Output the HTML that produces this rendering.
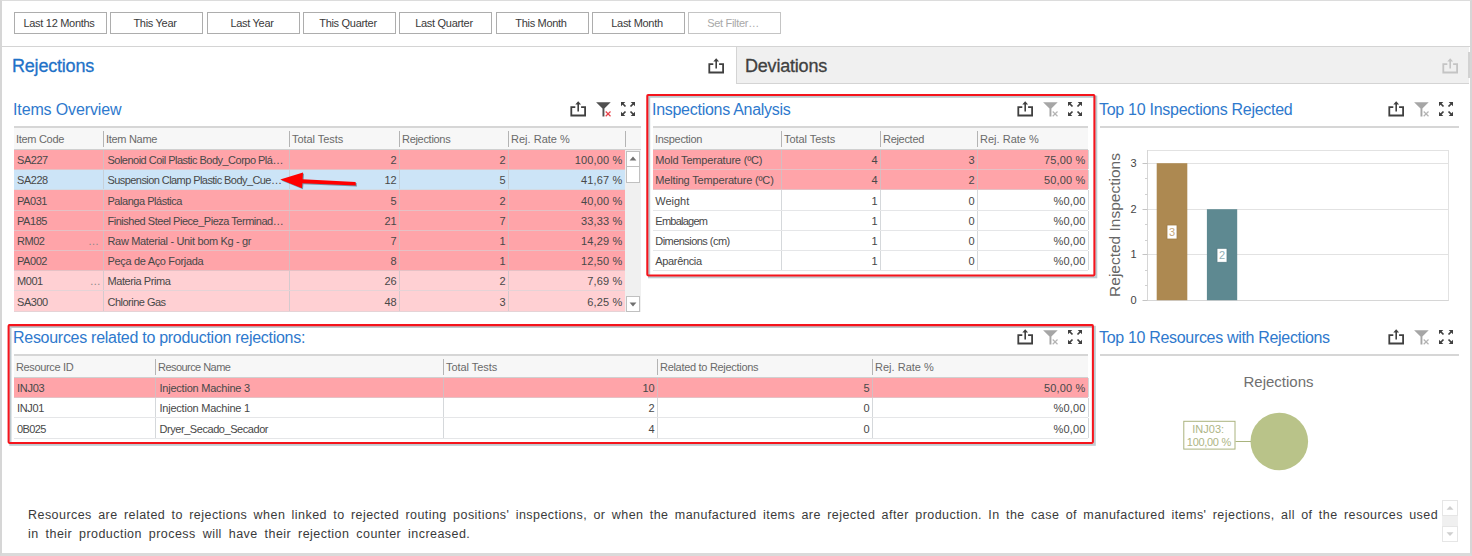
<!DOCTYPE html>
<html><head><meta charset="utf-8"><title>Rejections</title>
<style>
html,body{margin:0;padding:0;background:#fff}
body{width:1472px;height:556px;position:relative;overflow:hidden;font-family:"Liberation Sans",sans-serif;font-size:11px;color:#404040}
.a{position:absolute}
.frame{left:0;top:0;width:1468px;height:552px;border-left:2px solid #d6d6d6;border-top:1px solid #dcdcdc;border-right:2px solid #d6d6d6;border-bottom:3px solid #dadada}
.btn{position:absolute;top:12px;height:20px;width:91px;border:1px solid #adadad;background:#fff;text-align:center;line-height:20px;font-size:11px;color:#3a3a3a;letter-spacing:-0.3px;text-indent:-3px}
.hl{position:absolute;height:1px;background:#d4d4d4}
.title{position:absolute;color:#2e79cd;font-size:16px;white-space:nowrap;line-height:20px;letter-spacing:-0.1px}
.tline{position:absolute;height:2px;background:#d6d6d6}
.th{position:absolute;background:#f7f7f7;border-bottom:1px solid #d0d0d0;box-sizing:border-box}
.hc{position:absolute;top:0;color:#6a6a6a;white-space:nowrap;font-size:11px;letter-spacing:-0.3px}
.hs{position:absolute;width:1px;background:#b4b4b4}
.row{position:absolute;border-bottom:1px solid rgba(212,214,217,.6);box-sizing:border-box}
.c{position:absolute;top:0;bottom:0;white-space:nowrap;overflow:hidden;box-sizing:border-box;padding:0 2.5px 0 4px;letter-spacing:-0.45px;color:#484848}
.r{text-align:right}
.vs{position:absolute;top:0;bottom:0;width:1px;background:rgba(195,200,204,.7)}
.red{position:absolute;border:2px solid #e8141c;box-shadow:1px 1px 2px rgba(0,0,0,.3);box-sizing:border-box}
svg{position:absolute;overflow:visible}
</style></head><body>
<div class="a frame"></div>
<div class="btn" style="left:14px">Last 12 Months</div>
<div class="btn" style="left:110px">This Year</div>
<div class="btn" style="left:207px">Last Year</div>
<div class="btn" style="left:303px">This Quarter</div>
<div class="btn" style="left:399px">Last Quarter</div>
<div class="btn" style="left:496px">This Month</div>
<div class="btn" style="left:592px">Last Month</div>
<div class="btn" style="left:688px;color:#a8a8a8;border-color:#c4c4c4">Set Filter…</div>
<div class="hl" style="left:2px;top:46px;width:1468px"></div>
<div class="a" style="left:736px;top:47px;width:733px;height:37px;background:#f0f0f0;border-left:1px solid #d4d4d4;border-bottom:1px solid #d4d4d4;box-sizing:border-box"></div>
<div class="a" style="left:1468px;top:52px;width:2px;height:26px;background:#d2d2d2"></div>
<div class="a" style="left:12px;top:54px;font-size:18px;color:#1f72c8;line-height:24px;white-space:nowrap;letter-spacing:-0.2px;-webkit-text-stroke:0.3px #1f72c8">Rejections</div>
<div class="a" style="left:745px;top:54px;font-size:18px;color:#404040;line-height:24px;white-space:nowrap;letter-spacing:-0.2px;-webkit-text-stroke:0.3px #404040">Deviations</div>
<svg style="left:708px;top:58px" width="17" height="16" viewBox="0 0 17 16"><path d="M5.3 6.2H1.3V14.5H15.1V6.2H11.1" fill="none" stroke="#404040" stroke-width="1.8"/><path d="M8.2 10.6V2.5" fill="none" stroke="#404040" stroke-width="1.6"/><path d="M5.3 3.6L8.2 0.3L11.1 3.6Z" fill="#404040"/></svg>
<svg style="left:1442px;top:58px" width="17" height="16" viewBox="0 0 17 16"><path d="M5.3 6.2H1.3V14.5H15.1V6.2H11.1" fill="none" stroke="#c4c4c4" stroke-width="1.8"/><path d="M8.2 10.6V2.5" fill="none" stroke="#c4c4c4" stroke-width="1.6"/><path d="M5.3 3.6L8.2 0.3L11.1 3.6Z" fill="#c4c4c4"/></svg>
<div class="title" style="left:13px;top:100px;letter-spacing:-0.13px">Items Overview</div>
<svg style="left:570.4px;top:101.4px" width="17" height="16" viewBox="0 0 17 16"><path d="M5.3 6.2H1.3V14.5H15.1V6.2H11.1" fill="none" stroke="#404040" stroke-width="1.8"/><path d="M8.2 10.6V2.5" fill="none" stroke="#404040" stroke-width="1.6"/><path d="M5.3 3.6L8.2 0.3L11.1 3.6Z" fill="#404040"/></svg>
<svg style="left:596px;top:102px" width="16" height="16" viewBox="0 0 16 16"><path d="M0.1 0.2H14.7L8.4 6.6V14.4H6.5V6.6Z" fill="#505050"/><path d="M9.7 9.5L14.5 14.2M14.5 9.5L9.7 14.2" stroke="#e8424a" stroke-width="1.2" fill="none"/></svg>
<svg style="left:621.4px;top:101.9px" width="14" height="14" viewBox="0 0 14 14"><g><path d="M0 0H4.3L0 4.3Z" fill="#404040"/><path d="M1.5 1.5L4.5 4.5" stroke="#404040" stroke-width="1.7" fill="none"/></g><g transform="translate(14 0) scale(-1 1)"><path d="M0 0H4.3L0 4.3Z" fill="#404040"/><path d="M1.5 1.5L4.5 4.5" stroke="#404040" stroke-width="1.7" fill="none"/></g><g transform="translate(0 14) scale(1 -1)"><path d="M0 0H4.3L0 4.3Z" fill="#404040"/><path d="M1.5 1.5L4.5 4.5" stroke="#404040" stroke-width="1.7" fill="none"/></g><g transform="translate(14 14) scale(-1 -1)"><path d="M0 0H4.3L0 4.3Z" fill="#404040"/><path d="M1.5 1.5L4.5 4.5" stroke="#404040" stroke-width="1.7" fill="none"/></g></svg>
<div class="tline" style="left:14px;top:126px;width:627px"></div>
<div class="th" style="left:14px;top:128px;width:627px;height:22px">
<div class="hc" style="left:2px;line-height:23px">Item Code</div>
<div class="hs" style="left:89px;top:3px;height:16px"></div>
<div class="hc" style="left:92px;line-height:23px">Item Name</div>
<div class="hs" style="left:275px;top:3px;height:16px"></div>
<div class="hc" style="left:278px;line-height:23px;letter-spacing:-0.047px">Total Tests</div>
<div class="hs" style="left:385px;top:3px;height:16px"></div>
<div class="hc" style="left:388px;line-height:23px">Rejections</div>
<div class="hs" style="left:494px;top:3px;height:16px"></div>
<div class="hc" style="left:497px;line-height:23px;letter-spacing:0.011px">Rej. Rate %</div>
<div class="hs" style="left:611px;top:3px;height:16px"></div>
</div>
<div class="row" style="left:14px;top:150px;width:611px;height:20px;background:#ffa4a9;line-height:21px">
<div class="c" style="left:0px;width:89px;padding-left:3px">SA227</div>
<div class="vs" style="left:89px"></div>
<div class="c" style="left:89px;width:186px;padding-left:4.5px;letter-spacing:-0.515px">Solenoid Coil Plastic Body_Corpo Plá…</div>
<div class="vs" style="left:275px"></div>
<div class="c r" style="left:275px;width:110px;letter-spacing:-0.1px">2</div>
<div class="vs" style="left:385px"></div>
<div class="c r" style="left:385px;width:109px;letter-spacing:-0.1px">2</div>
<div class="vs" style="left:494px"></div>
<div class="c r" style="left:494px;width:117px;letter-spacing:0.15px">100,00 %</div>
<div class="vs" style="left:611px"></div>
</div>
<div class="row" style="left:14px;top:170px;width:611px;height:20px;background:#cce4f7;line-height:21px">
<div class="c" style="left:0px;width:89px;padding-left:3px">SA228</div>
<div class="vs" style="left:89px"></div>
<div class="c" style="left:89px;width:186px;padding-left:4.5px;letter-spacing:-0.57px">Suspension Clamp Plastic Body_Cue…</div>
<div class="vs" style="left:275px"></div>
<div class="c r" style="left:275px;width:110px;letter-spacing:-0.1px">12</div>
<div class="vs" style="left:385px"></div>
<div class="c r" style="left:385px;width:109px;letter-spacing:-0.1px">5</div>
<div class="vs" style="left:494px"></div>
<div class="c r" style="left:494px;width:117px;letter-spacing:0.15px">41,67 %</div>
<div class="vs" style="left:611px"></div>
</div>
<div class="row" style="left:14px;top:190px;width:611px;height:21px;background:#ffa4a9;line-height:22px">
<div class="c" style="left:0px;width:89px;padding-left:3px">PA031</div>
<div class="vs" style="left:89px"></div>
<div class="c" style="left:89px;width:186px;padding-left:4.5px;letter-spacing:-0.47px">Palanga Plástica</div>
<div class="vs" style="left:275px"></div>
<div class="c r" style="left:275px;width:110px;letter-spacing:-0.1px">5</div>
<div class="vs" style="left:385px"></div>
<div class="c r" style="left:385px;width:109px;letter-spacing:-0.1px">2</div>
<div class="vs" style="left:494px"></div>
<div class="c r" style="left:494px;width:117px;letter-spacing:0.15px">40,00 %</div>
<div class="vs" style="left:611px"></div>
</div>
<div class="row" style="left:14px;top:211px;width:611px;height:20px;background:#ffa4a9;line-height:21px">
<div class="c" style="left:0px;width:89px;padding-left:3px">PA185</div>
<div class="vs" style="left:89px"></div>
<div class="c" style="left:89px;width:186px;padding-left:4.5px;letter-spacing:-0.48px">Finished Steel Piece_Pieza Terminad…</div>
<div class="vs" style="left:275px"></div>
<div class="c r" style="left:275px;width:110px;letter-spacing:-0.1px">21</div>
<div class="vs" style="left:385px"></div>
<div class="c r" style="left:385px;width:109px;letter-spacing:-0.1px">7</div>
<div class="vs" style="left:494px"></div>
<div class="c r" style="left:494px;width:117px;letter-spacing:0.15px">33,33 %</div>
<div class="vs" style="left:611px"></div>
</div>
<div class="row" style="left:14px;top:231px;width:611px;height:20px;background:#ffa4a9;line-height:21px">
<div class="c" style="left:0px;width:89px;padding-left:3px">RM02<span style="position:absolute;right:4.5px;color:#888">…</span></div>
<div class="vs" style="left:89px"></div>
<div class="c" style="left:89px;width:186px;padding-left:4.5px;letter-spacing:-0.335px">Raw Material - Unit bom Kg - gr</div>
<div class="vs" style="left:275px"></div>
<div class="c r" style="left:275px;width:110px;letter-spacing:-0.1px">7</div>
<div class="vs" style="left:385px"></div>
<div class="c r" style="left:385px;width:109px;letter-spacing:-0.1px">1</div>
<div class="vs" style="left:494px"></div>
<div class="c r" style="left:494px;width:117px;letter-spacing:0.15px">14,29 %</div>
<div class="vs" style="left:611px"></div>
</div>
<div class="row" style="left:14px;top:251px;width:611px;height:20px;background:#ffa4a9;line-height:21px">
<div class="c" style="left:0px;width:89px;padding-left:3px">PA002</div>
<div class="vs" style="left:89px"></div>
<div class="c" style="left:89px;width:186px;padding-left:4.5px;letter-spacing:-0.335px">Peça de Aço Forjada</div>
<div class="vs" style="left:275px"></div>
<div class="c r" style="left:275px;width:110px;letter-spacing:-0.1px">8</div>
<div class="vs" style="left:385px"></div>
<div class="c r" style="left:385px;width:109px;letter-spacing:-0.1px">1</div>
<div class="vs" style="left:494px"></div>
<div class="c r" style="left:494px;width:117px;letter-spacing:0.15px">12,50 %</div>
<div class="vs" style="left:611px"></div>
</div>
<div class="row" style="left:14px;top:271px;width:611px;height:20px;background:#ffd0d3;line-height:21px">
<div class="c" style="left:0px;width:89px;padding-left:3px">M001<span style="position:absolute;right:2.8px;color:#888">…</span></div>
<div class="vs" style="left:89px"></div>
<div class="c" style="left:89px;width:186px;padding-left:4.5px;letter-spacing:-0.422px">Materia Prima</div>
<div class="vs" style="left:275px"></div>
<div class="c r" style="left:275px;width:110px;letter-spacing:-0.1px">26</div>
<div class="vs" style="left:385px"></div>
<div class="c r" style="left:385px;width:109px;letter-spacing:-0.1px">2</div>
<div class="vs" style="left:494px"></div>
<div class="c r" style="left:494px;width:117px;letter-spacing:0.15px">7,69 %</div>
<div class="vs" style="left:611px"></div>
</div>
<div class="row" style="left:14px;top:291px;width:611px;height:21px;background:#ffd0d3;line-height:22px">
<div class="c" style="left:0px;width:89px;padding-left:3px">SA300</div>
<div class="vs" style="left:89px"></div>
<div class="c" style="left:89px;width:186px;padding-left:4.5px;letter-spacing:-0.509px">Chlorine Gas</div>
<div class="vs" style="left:275px"></div>
<div class="c r" style="left:275px;width:110px;letter-spacing:-0.1px">48</div>
<div class="vs" style="left:385px"></div>
<div class="c r" style="left:385px;width:109px;letter-spacing:-0.1px">3</div>
<div class="vs" style="left:494px"></div>
<div class="c r" style="left:494px;width:117px;letter-spacing:0.15px">6,25 %</div>
<div class="vs" style="left:611px"></div>
</div>
<div class="a" style="left:625px;top:150px;width:16px;height:162px;background:#f0f0f0"></div>
<div class="a" style="left:626px;top:151px;width:12px;height:14px;background:#fff;border:1px solid #c0c0c0"></div>
<svg style="left:628px;top:155px" width="10" height="7" viewBox="0 0 10 7"><path d="M1.6 5.4L5 1.6L8.4 5.4Z" fill="#707070"/></svg>
<div class="a" style="left:626px;top:166px;width:12px;height:15px;background:#fff;border:1px solid #c0c0c0"></div>
<div class="a" style="left:626px;top:296px;width:12px;height:14px;background:#fff;border:1px solid #c0c0c0"></div>
<svg style="left:628px;top:301px" width="10" height="7" viewBox="0 0 10 7"><path d="M1.6 1.6L5 5.4L8.4 1.6Z" fill="#707070"/></svg>
<svg style="left:270px;top:165px" width="100" height="35" viewBox="270 165 100 35"><g style="filter:drop-shadow(1px 1px 0.6px rgba(0,60,80,.45))"><path d="M280.2 179.4L303 172.6L302.6 179.2L355.6 182L355.9 185.6L302.4 183.2L302 188.2Z" fill="#ff0000"/></g></svg>
<svg style="left:0;top:0;pointer-events:none" width="1472" height="556" viewBox="0 0 1472 556"><rect x="649.1" y="96.7" width="447.1" height="180.5" fill="none" stroke="rgba(110,140,150,.45)" stroke-width="2.2" style="filter:blur(0.7px)"/><rect x="647.3" y="94.9" width="447.1" height="180.5" rx="0.8" fill="none" stroke="#f5141c" stroke-width="2.05"/></svg>
<div class="title" style="left:652px;top:100px;letter-spacing:-0.28px">Inspections Analysis</div>
<svg style="left:1017.4px;top:101.4px" width="17" height="16" viewBox="0 0 17 16"><path d="M5.3 6.2H1.3V14.5H15.1V6.2H11.1" fill="none" stroke="#404040" stroke-width="1.8"/><path d="M8.2 10.6V2.5" fill="none" stroke="#404040" stroke-width="1.6"/><path d="M5.3 3.6L8.2 0.3L11.1 3.6Z" fill="#404040"/></svg>
<svg style="left:1043px;top:102px" width="16" height="16" viewBox="0 0 16 16"><path d="M0.1 0.2H14.7L8.4 6.6V14.4H6.5V6.6Z" fill="#a6a6a6"/><path d="M9.7 9.5L14.5 14.2M14.5 9.5L9.7 14.2" stroke="#b4b4b4" stroke-width="1.2" fill="none"/></svg>
<svg style="left:1068.4px;top:101.9px" width="14" height="14" viewBox="0 0 14 14"><g><path d="M0 0H4.3L0 4.3Z" fill="#404040"/><path d="M1.5 1.5L4.5 4.5" stroke="#404040" stroke-width="1.7" fill="none"/></g><g transform="translate(14 0) scale(-1 1)"><path d="M0 0H4.3L0 4.3Z" fill="#404040"/><path d="M1.5 1.5L4.5 4.5" stroke="#404040" stroke-width="1.7" fill="none"/></g><g transform="translate(0 14) scale(1 -1)"><path d="M0 0H4.3L0 4.3Z" fill="#404040"/><path d="M1.5 1.5L4.5 4.5" stroke="#404040" stroke-width="1.7" fill="none"/></g><g transform="translate(14 14) scale(-1 -1)"><path d="M0 0H4.3L0 4.3Z" fill="#404040"/><path d="M1.5 1.5L4.5 4.5" stroke="#404040" stroke-width="1.7" fill="none"/></g></svg>
<div class="tline" style="left:653px;top:126px;width:435px"></div>
<div class="th" style="left:653px;top:128px;width:435px;height:22px">
<div class="hc" style="left:2px;line-height:23px">Inspection</div>
<div class="hs" style="left:128px;top:3px;height:16px"></div>
<div class="hc" style="left:131px;line-height:23px;letter-spacing:-0.047px">Total Tests</div>
<div class="hs" style="left:227px;top:3px;height:16px"></div>
<div class="hc" style="left:230px;line-height:23px">Rejected</div>
<div class="hs" style="left:324px;top:3px;height:16px"></div>
<div class="hc" style="left:327px;line-height:23px;letter-spacing:0.011px">Rej. Rate %</div>
</div>
<div class="row" style="left:653px;top:150px;width:435px;height:20px;background:#ffa4a9;line-height:21px">
<div class="c" style="left:0px;width:128px;padding-left:2.3px;letter-spacing:-0.185px">Mold Temperature (ºC)</div>
<div class="vs" style="left:128px"></div>
<div class="c r" style="left:128px;width:99px;letter-spacing:-0.1px">4</div>
<div class="vs" style="left:227px"></div>
<div class="c r" style="left:227px;width:97px;letter-spacing:-0.1px">3</div>
<div class="vs" style="left:324px"></div>
<div class="c r" style="left:324px;width:111px;letter-spacing:0.15px">75,00 %</div>
<div class="vs" style="left:435px"></div>
</div>
<div class="row" style="left:653px;top:170px;width:435px;height:20px;background:#ffa4a9;line-height:21px">
<div class="c" style="left:0px;width:128px;padding-left:2.3px;letter-spacing:-0.17px">Melting Temperature (ºC)</div>
<div class="vs" style="left:128px"></div>
<div class="c r" style="left:128px;width:99px;letter-spacing:-0.1px">4</div>
<div class="vs" style="left:227px"></div>
<div class="c r" style="left:227px;width:97px;letter-spacing:-0.1px">2</div>
<div class="vs" style="left:324px"></div>
<div class="c r" style="left:324px;width:111px;letter-spacing:0.15px">50,00 %</div>
<div class="vs" style="left:435px"></div>
</div>
<div class="row" style="left:653px;top:190px;width:435px;height:21px;background:#fff;line-height:22px">
<div class="c" style="left:0px;width:128px;padding-left:2.3px;letter-spacing:-0.027px">Weight</div>
<div class="vs" style="left:128px"></div>
<div class="c r" style="left:128px;width:99px;letter-spacing:-0.1px">1</div>
<div class="vs" style="left:227px"></div>
<div class="c r" style="left:227px;width:97px;letter-spacing:-0.1px">0</div>
<div class="vs" style="left:324px"></div>
<div class="c r" style="left:324px;width:111px;letter-spacing:0.15px">%0,00</div>
<div class="vs" style="left:435px"></div>
</div>
<div class="row" style="left:653px;top:211px;width:435px;height:20px;background:#fff;line-height:21px">
<div class="c" style="left:0px;width:128px;padding-left:2.3px;letter-spacing:-0.75px">Embalagem</div>
<div class="vs" style="left:128px"></div>
<div class="c r" style="left:128px;width:99px;letter-spacing:-0.1px">1</div>
<div class="vs" style="left:227px"></div>
<div class="c r" style="left:227px;width:97px;letter-spacing:-0.1px">0</div>
<div class="vs" style="left:324px"></div>
<div class="c r" style="left:324px;width:111px;letter-spacing:0.15px">%0,00</div>
<div class="vs" style="left:435px"></div>
</div>
<div class="row" style="left:653px;top:231px;width:435px;height:20px;background:#fff;line-height:21px">
<div class="c" style="left:0px;width:128px;padding-left:2.3px;letter-spacing:-0.544px">Dimensions (cm)</div>
<div class="vs" style="left:128px"></div>
<div class="c r" style="left:128px;width:99px;letter-spacing:-0.1px">1</div>
<div class="vs" style="left:227px"></div>
<div class="c r" style="left:227px;width:97px;letter-spacing:-0.1px">0</div>
<div class="vs" style="left:324px"></div>
<div class="c r" style="left:324px;width:111px;letter-spacing:0.15px">%0,00</div>
<div class="vs" style="left:435px"></div>
</div>
<div class="row" style="left:653px;top:251px;width:435px;height:20px;background:#fff;line-height:21px">
<div class="c" style="left:0px;width:128px;padding-left:2.3px;letter-spacing:-0.342px">Aparência</div>
<div class="vs" style="left:128px"></div>
<div class="c r" style="left:128px;width:99px;letter-spacing:-0.1px">1</div>
<div class="vs" style="left:227px"></div>
<div class="c r" style="left:227px;width:97px;letter-spacing:-0.1px">0</div>
<div class="vs" style="left:324px"></div>
<div class="c r" style="left:324px;width:111px;letter-spacing:0.15px">%0,00</div>
<div class="vs" style="left:435px"></div>
</div>
<div class="title" style="left:1099px;top:100px;letter-spacing:-0.28px">Top 10 Inspections Rejected</div>
<svg style="left:1388.4px;top:101.4px" width="17" height="16" viewBox="0 0 17 16"><path d="M5.3 6.2H1.3V14.5H15.1V6.2H11.1" fill="none" stroke="#404040" stroke-width="1.8"/><path d="M8.2 10.6V2.5" fill="none" stroke="#404040" stroke-width="1.6"/><path d="M5.3 3.6L8.2 0.3L11.1 3.6Z" fill="#404040"/></svg>
<svg style="left:1414px;top:102px" width="16" height="16" viewBox="0 0 16 16"><path d="M0.1 0.2H14.7L8.4 6.6V14.4H6.5V6.6Z" fill="#a6a6a6"/><path d="M9.7 9.5L14.5 14.2M14.5 9.5L9.7 14.2" stroke="#b4b4b4" stroke-width="1.2" fill="none"/></svg>
<svg style="left:1439.4px;top:101.9px" width="14" height="14" viewBox="0 0 14 14"><g><path d="M0 0H4.3L0 4.3Z" fill="#404040"/><path d="M1.5 1.5L4.5 4.5" stroke="#404040" stroke-width="1.7" fill="none"/></g><g transform="translate(14 0) scale(-1 1)"><path d="M0 0H4.3L0 4.3Z" fill="#404040"/><path d="M1.5 1.5L4.5 4.5" stroke="#404040" stroke-width="1.7" fill="none"/></g><g transform="translate(0 14) scale(1 -1)"><path d="M0 0H4.3L0 4.3Z" fill="#404040"/><path d="M1.5 1.5L4.5 4.5" stroke="#404040" stroke-width="1.7" fill="none"/></g><g transform="translate(14 14) scale(-1 -1)"><path d="M0 0H4.3L0 4.3Z" fill="#404040"/><path d="M1.5 1.5L4.5 4.5" stroke="#404040" stroke-width="1.7" fill="none"/></g></svg>
<div class="tline" style="left:1100px;top:126px;width:359px"></div>
<svg style="left:1096px;top:140px" width="370" height="175" viewBox="1096 140 370 175" font-family="Liberation Sans, sans-serif">
<rect x="1147.5" y="150.5" width="301" height="150" fill="#fff" stroke="#e2e2e2" stroke-width="1"/>
<path d="M1147 163.5H1448" stroke="#e2e2e2" stroke-width="1"/>
<path d="M1147 209.5H1448" stroke="#e2e2e2" stroke-width="1"/>
<path d="M1147 254.5H1448" stroke="#e2e2e2" stroke-width="1"/>
<path d="M1147.5 150V300.5H1448.5" stroke="#d6d6d6" stroke-width="1" fill="none"/>
<path d="M1142.5 163.5H1147.5" stroke="#c4c4c4" stroke-width="1"/>
<text x="1136.6" y="167.1" font-size="11" fill="#454545" text-anchor="end">3</text>
<path d="M1142.5 209.5H1147.5" stroke="#c4c4c4" stroke-width="1"/>
<text x="1136.6" y="213.1" font-size="11" fill="#454545" text-anchor="end">2</text>
<path d="M1142.5 254.5H1147.5" stroke="#c4c4c4" stroke-width="1"/>
<text x="1136.6" y="258.1" font-size="11" fill="#454545" text-anchor="end">1</text>
<path d="M1142.5 300.5H1147.5" stroke="#c4c4c4" stroke-width="1"/>
<text x="1136.6" y="304.1" font-size="11" fill="#454545" text-anchor="end">0</text>
<path d="M1145 285.5H1147.5" stroke="#d0d0d0" stroke-width="1"/>
<path d="M1145 270.5H1147.5" stroke="#d0d0d0" stroke-width="1"/>
<path d="M1145 240.5H1147.5" stroke="#d0d0d0" stroke-width="1"/>
<path d="M1145 224.5H1147.5" stroke="#d0d0d0" stroke-width="1"/>
<path d="M1145 194.5H1147.5" stroke="#d0d0d0" stroke-width="1"/>
<path d="M1145 178.5H1147.5" stroke="#d0d0d0" stroke-width="1"/>
<rect x="1156.7" y="163.2" width="30.6" height="137" fill="#ad8951"/>
<rect x="1206.9" y="209.2" width="30.3" height="91" fill="#5e8991"/>
<rect x="1167" y="225" width="10" height="14" fill="#fff" stroke="#a17e46" stroke-width="0.8"/>
<text x="1172" y="236.1" font-size="11" fill="#c4a77c" text-anchor="middle">3</text>
<rect x="1217" y="248.3" width="10" height="14" fill="#fff" stroke="#557d85" stroke-width="0.8"/>
<text x="1222" y="259.4" font-size="11" fill="#8fb0b7" text-anchor="middle">2</text>
<text transform="translate(1119.5 225) rotate(-90)" font-size="15.5" fill="#666" text-anchor="middle">Rejected Inspections</text>
</svg>
<svg style="left:0;top:0;pointer-events:none" width="1472" height="556" viewBox="0 0 1472 556"><rect x="10.4" y="326.9" width="1084.3" height="117.8" fill="none" stroke="rgba(110,140,150,.45)" stroke-width="2.2" style="filter:blur(0.7px)"/><rect x="8.6" y="325.1" width="1084.3" height="117.8" rx="0.8" fill="none" stroke="#f5141c" stroke-width="2.05"/></svg>
<div class="title" style="left:13px;top:328px;letter-spacing:-0.28px">Resources related to production rejections:</div>
<svg style="left:1017.4px;top:329.4px" width="17" height="16" viewBox="0 0 17 16"><path d="M5.3 6.2H1.3V14.5H15.1V6.2H11.1" fill="none" stroke="#404040" stroke-width="1.8"/><path d="M8.2 10.6V2.5" fill="none" stroke="#404040" stroke-width="1.6"/><path d="M5.3 3.6L8.2 0.3L11.1 3.6Z" fill="#404040"/></svg>
<svg style="left:1043px;top:330px" width="16" height="16" viewBox="0 0 16 16"><path d="M0.1 0.2H14.7L8.4 6.6V14.4H6.5V6.6Z" fill="#a6a6a6"/><path d="M9.7 9.5L14.5 14.2M14.5 9.5L9.7 14.2" stroke="#b4b4b4" stroke-width="1.2" fill="none"/></svg>
<svg style="left:1068.4px;top:329.9px" width="14" height="14" viewBox="0 0 14 14"><g><path d="M0 0H4.3L0 4.3Z" fill="#404040"/><path d="M1.5 1.5L4.5 4.5" stroke="#404040" stroke-width="1.7" fill="none"/></g><g transform="translate(14 0) scale(-1 1)"><path d="M0 0H4.3L0 4.3Z" fill="#404040"/><path d="M1.5 1.5L4.5 4.5" stroke="#404040" stroke-width="1.7" fill="none"/></g><g transform="translate(0 14) scale(1 -1)"><path d="M0 0H4.3L0 4.3Z" fill="#404040"/><path d="M1.5 1.5L4.5 4.5" stroke="#404040" stroke-width="1.7" fill="none"/></g><g transform="translate(14 14) scale(-1 -1)"><path d="M0 0H4.3L0 4.3Z" fill="#404040"/><path d="M1.5 1.5L4.5 4.5" stroke="#404040" stroke-width="1.7" fill="none"/></g></svg>
<div class="tline" style="left:14px;top:354px;width:1074px"></div>
<div class="th" style="left:14px;top:356px;width:1074px;height:22px">
<div class="hc" style="left:2px;line-height:23px;letter-spacing:-0.354px">Resource ID</div>
<div class="hs" style="left:141px;top:3px;height:16px"></div>
<div class="hc" style="left:144px;line-height:23px;letter-spacing:-0.548px">Resource Name</div>
<div class="hs" style="left:429px;top:3px;height:16px"></div>
<div class="hc" style="left:432px;line-height:23px;letter-spacing:-0.047px">Total Tests</div>
<div class="hs" style="left:643px;top:3px;height:16px"></div>
<div class="hc" style="left:646px;line-height:23px">Related to Rejections</div>
<div class="hs" style="left:858px;top:3px;height:16px"></div>
<div class="hc" style="left:861px;line-height:23px;letter-spacing:0.011px">Rej. Rate %</div>
</div>
<div class="row" style="left:14px;top:378px;width:1074px;height:20px;background:#ffa4a9;line-height:21px">
<div class="c" style="left:0px;width:141px;padding-left:3px;letter-spacing:-0.259px">INJ03</div>
<div class="vs" style="left:141px"></div>
<div class="c" style="left:141px;width:288px;padding-left:4.5px;letter-spacing:-0.227px">Injection Machine 3</div>
<div class="vs" style="left:429px"></div>
<div class="c r" style="left:429px;width:214px;letter-spacing:-0.1px">10</div>
<div class="vs" style="left:643px"></div>
<div class="c r" style="left:643px;width:215px;letter-spacing:-0.1px">5</div>
<div class="vs" style="left:858px"></div>
<div class="c r" style="left:858px;width:216px;letter-spacing:0.15px">50,00 %</div>
<div class="vs" style="left:1074px"></div>
</div>
<div class="row" style="left:14px;top:398px;width:1074px;height:20px;background:#fff;line-height:21px">
<div class="c" style="left:0px;width:141px;padding-left:3px;letter-spacing:-0.359px">INJ01</div>
<div class="vs" style="left:141px"></div>
<div class="c" style="left:141px;width:288px;padding-left:4.5px;letter-spacing:-0.227px">Injection Machine 1</div>
<div class="vs" style="left:429px"></div>
<div class="c r" style="left:429px;width:214px;letter-spacing:-0.1px">2</div>
<div class="vs" style="left:643px"></div>
<div class="c r" style="left:643px;width:215px;letter-spacing:-0.1px">0</div>
<div class="vs" style="left:858px"></div>
<div class="c r" style="left:858px;width:216px;letter-spacing:0.15px">%0,00</div>
<div class="vs" style="left:1074px"></div>
</div>
<div class="row" style="left:14px;top:418px;width:1074px;height:21px;background:#fff;line-height:22px">
<div class="c" style="left:0px;width:141px;padding-left:3px;letter-spacing:-0.627px">0B025</div>
<div class="vs" style="left:141px"></div>
<div class="c" style="left:141px;width:288px;padding-left:4.5px;letter-spacing:-0.442px">Dryer_Secado_Secador</div>
<div class="vs" style="left:429px"></div>
<div class="c r" style="left:429px;width:214px;letter-spacing:-0.1px">4</div>
<div class="vs" style="left:643px"></div>
<div class="c r" style="left:643px;width:215px;letter-spacing:-0.1px">0</div>
<div class="vs" style="left:858px"></div>
<div class="c r" style="left:858px;width:216px;letter-spacing:0.15px">%0,00</div>
<div class="vs" style="left:1074px"></div>
</div>
<div class="title" style="left:1099px;top:328px;letter-spacing:-0.32px">Top 10 Resources with Rejections</div>
<svg style="left:1388.4px;top:329.4px" width="17" height="16" viewBox="0 0 17 16"><path d="M5.3 6.2H1.3V14.5H15.1V6.2H11.1" fill="none" stroke="#404040" stroke-width="1.8"/><path d="M8.2 10.6V2.5" fill="none" stroke="#404040" stroke-width="1.6"/><path d="M5.3 3.6L8.2 0.3L11.1 3.6Z" fill="#404040"/></svg>
<svg style="left:1414px;top:330px" width="16" height="16" viewBox="0 0 16 16"><path d="M0.1 0.2H14.7L8.4 6.6V14.4H6.5V6.6Z" fill="#a6a6a6"/><path d="M9.7 9.5L14.5 14.2M14.5 9.5L9.7 14.2" stroke="#b4b4b4" stroke-width="1.2" fill="none"/></svg>
<svg style="left:1439.4px;top:329.9px" width="14" height="14" viewBox="0 0 14 14"><g><path d="M0 0H4.3L0 4.3Z" fill="#404040"/><path d="M1.5 1.5L4.5 4.5" stroke="#404040" stroke-width="1.7" fill="none"/></g><g transform="translate(14 0) scale(-1 1)"><path d="M0 0H4.3L0 4.3Z" fill="#404040"/><path d="M1.5 1.5L4.5 4.5" stroke="#404040" stroke-width="1.7" fill="none"/></g><g transform="translate(0 14) scale(1 -1)"><path d="M0 0H4.3L0 4.3Z" fill="#404040"/><path d="M1.5 1.5L4.5 4.5" stroke="#404040" stroke-width="1.7" fill="none"/></g><g transform="translate(14 14) scale(-1 -1)"><path d="M0 0H4.3L0 4.3Z" fill="#404040"/><path d="M1.5 1.5L4.5 4.5" stroke="#404040" stroke-width="1.7" fill="none"/></g></svg>
<div class="tline" style="left:1100px;top:354px;width:359px"></div>
<svg style="left:1170px;top:365px" width="170" height="115" viewBox="1170 365 170 115" font-family="Liberation Sans, sans-serif">
<text x="1278.5" y="387.3" font-size="15" fill="#707070" text-anchor="middle">Rejections</text>
<circle cx="1279.3" cy="441.5" r="28.8" fill="#b9c389"/>
<path d="M1235.5 441.5H1251" stroke="#a9b47e" stroke-width="1"/>
<rect x="1183.8" y="421.3" width="51.2" height="27.8" fill="#fff" stroke="#aab37f" stroke-width="1"/>
<text x="1208.2" y="432.5" font-size="11" fill="#adb585" text-anchor="middle">INJ03:</text>
<text x="1208.9" y="446.1" font-size="11" fill="#adb585" text-anchor="middle" letter-spacing="-0.3">100,00 %</text>
</svg>
<div class="a" style="left:1442px;top:500px;width:16px;height:42px;background:#f0f0f0"></div>
<div class="a" style="left:1442px;top:500px;width:14px;height:14px;background:#fff;border:1px solid #e6e6e6"></div>
<svg style="left:1445px;top:505px" width="10" height="6" viewBox="0 0 10 6"><path d="M1.5 4.8L5 1L8.5 4.8Z" fill="#cfcfcf"/></svg>
<div class="a" style="left:1442px;top:526px;width:14px;height:14px;background:#fff;border:1px solid #e6e6e6"></div>
<svg style="left:1445px;top:531px" width="10" height="6" viewBox="0 0 10 6"><path d="M1.5 1.2L5 5L8.5 1.2Z" fill="#cfcfcf"/></svg>
<div class="a" id="bt" style="left:28px;top:506px;width:1420px;font-size:12.5px;line-height:19px;color:#3a3a3a;white-space:nowrap;letter-spacing:0.45px;word-spacing:2.415px">Resources are related to rejections when linked to rejected routing positions' inspections, or when the manufactured items are rejected after production. In the case of manufactured items' rejections, all of the resources used<br><span style="word-spacing:3.0px">in their production process will have their rejection counter increased.</span></div>
</body></html>
